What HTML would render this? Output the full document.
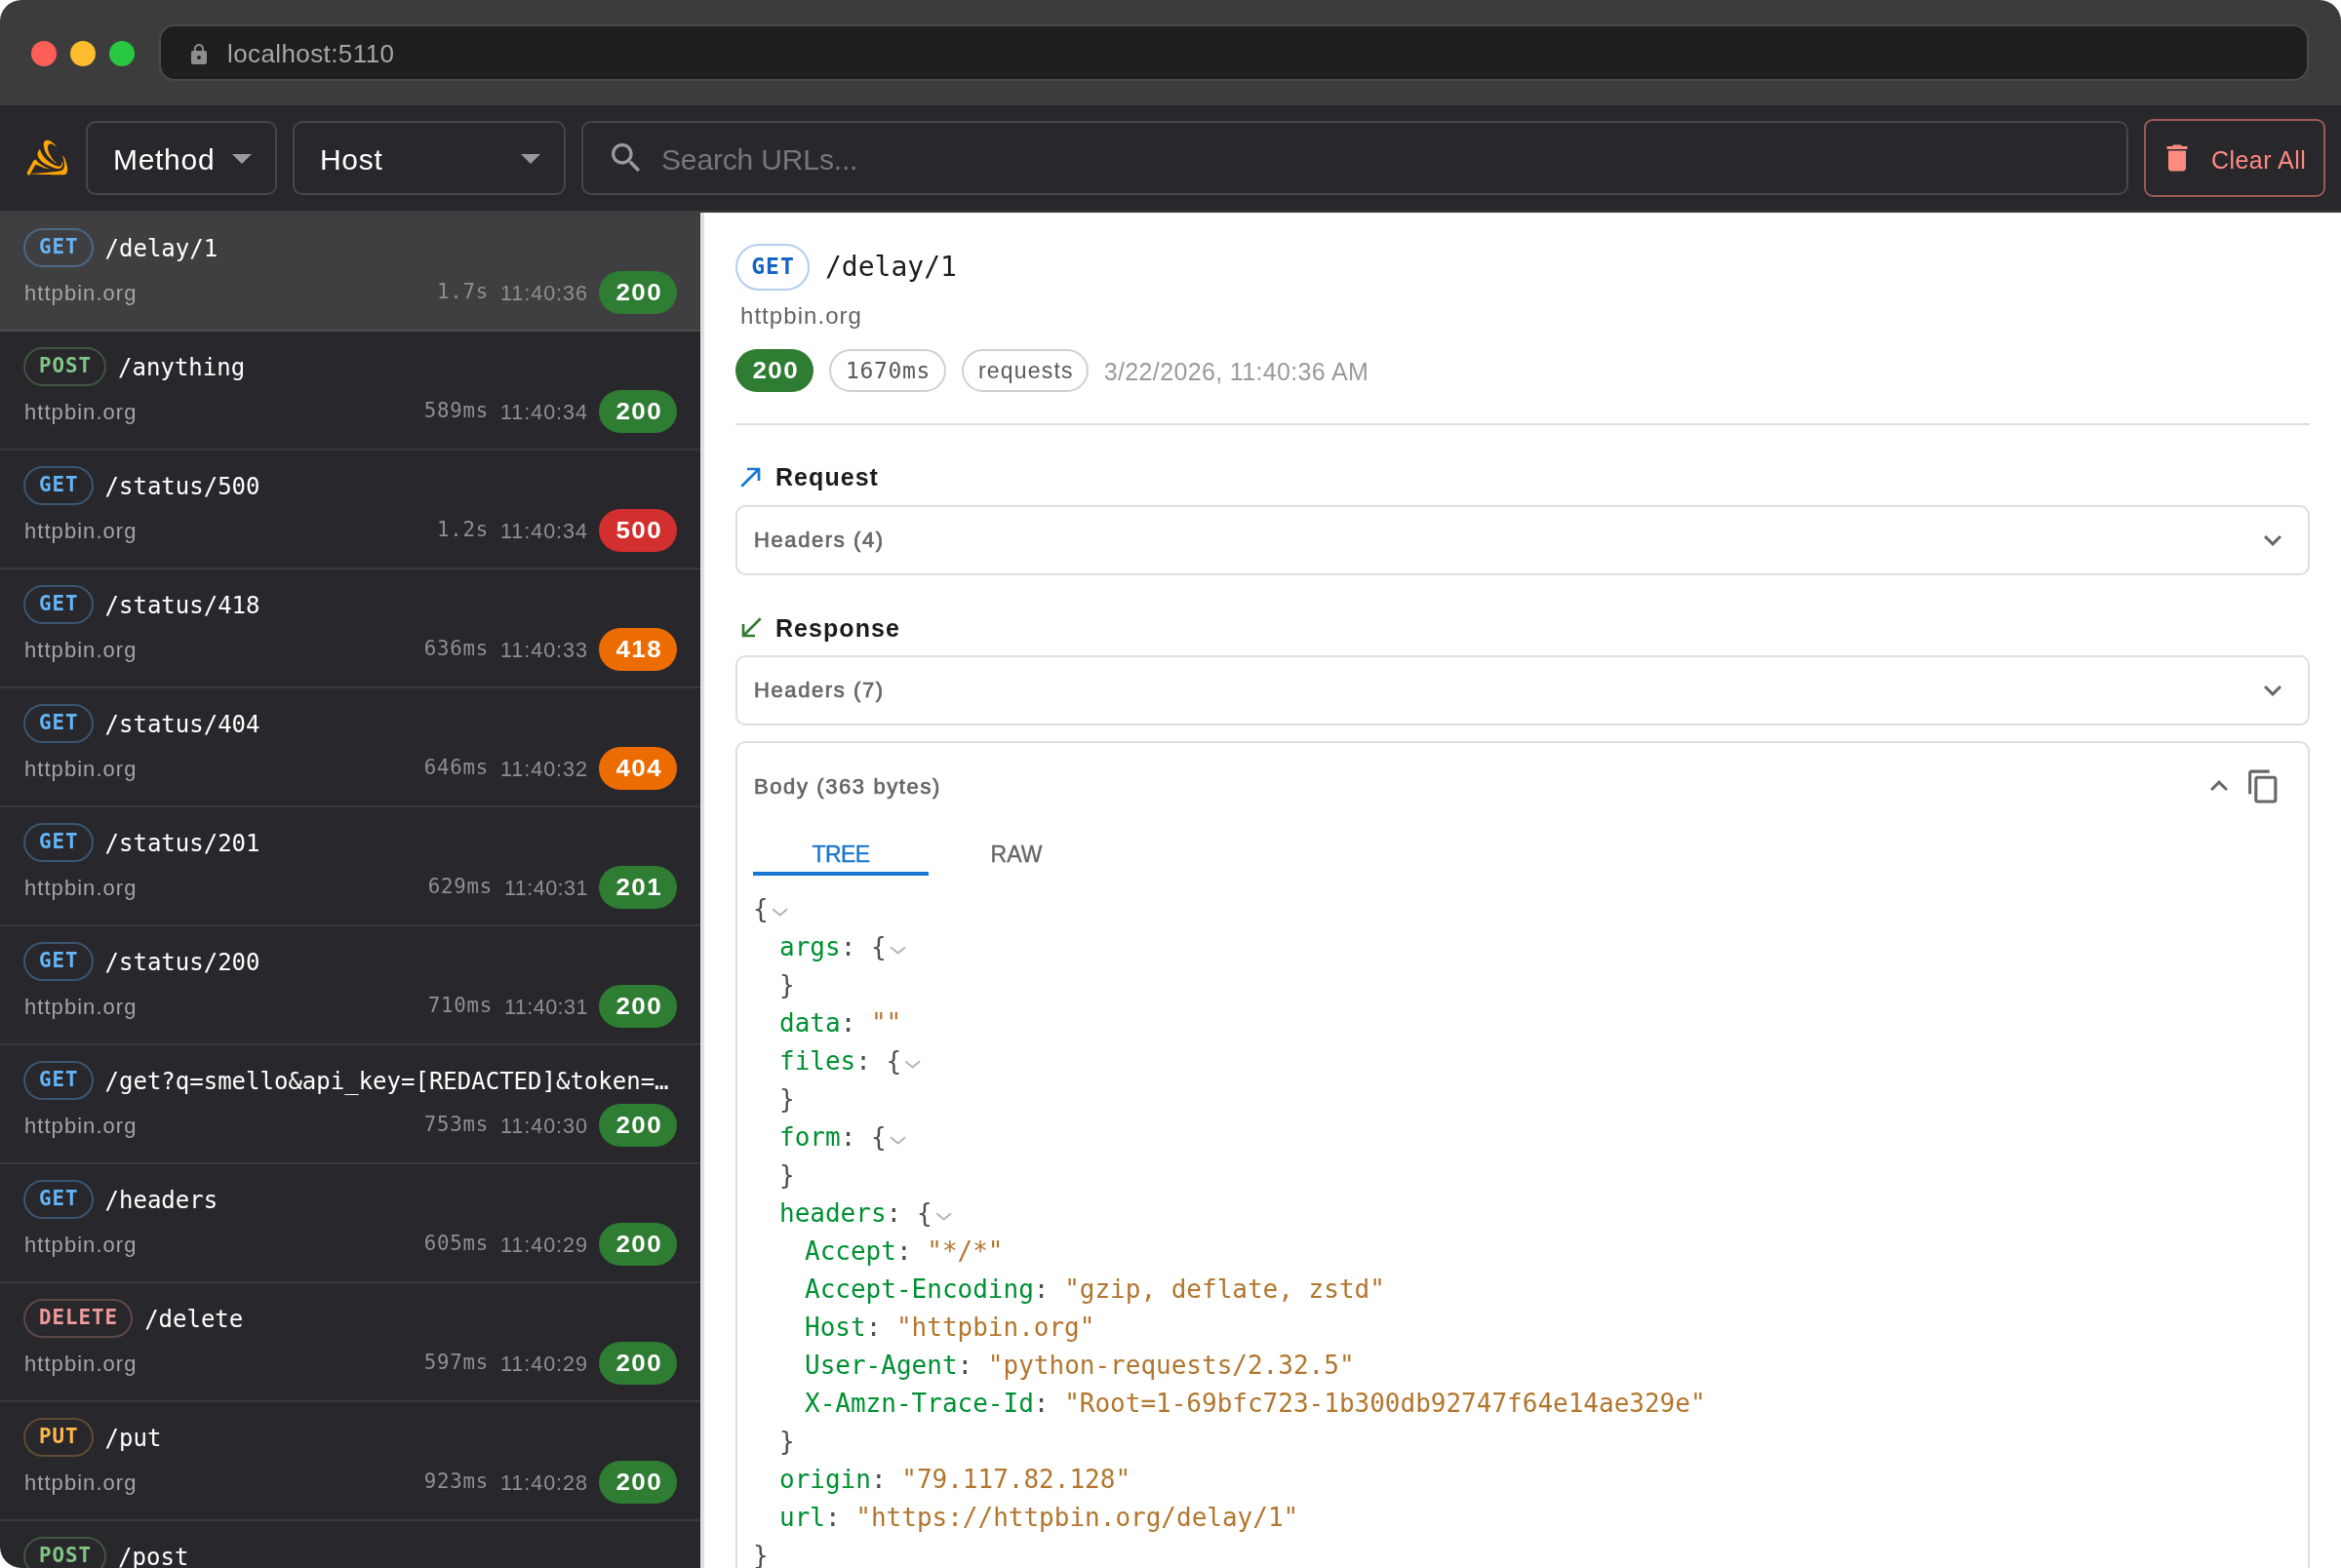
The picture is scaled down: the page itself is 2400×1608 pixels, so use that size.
<!DOCTYPE html>
<html lang="en">
<head>
<meta charset="utf-8">
<title>Smello</title>
<style>
*{box-sizing:border-box;margin:0;padding:0}
html,body{width:2400px;height:1608px;overflow:hidden;background:#fff}
body{font-family:"Liberation Sans",sans-serif;-webkit-font-smoothing:antialiased}
.mono{font-family:"DejaVu Sans Mono","Liberation Mono",monospace}
#win{position:absolute;left:0;top:0;width:2400px;height:1608px;overflow:hidden;border-radius:22px 22px 0 22px;background:#fff;will-change:transform}
/* browser chrome */
#chrome{position:absolute;left:0;top:0;width:2400px;height:108px;background:#3c3c3c}
.tl{position:absolute;top:42px;width:26px;height:26px;border-radius:50%}
#urlbar{position:absolute;left:163px;top:25px;width:2204px;height:58px;border-radius:16px;background:#1e1e1e;border:2px solid #4a4a4a}
#urlbar svg{position:absolute;left:27px;top:17px;width:24px;height:24px;fill:#8c8c8c}
#urlbar span{position:absolute;left:68px;top:0;line-height:56px;font-size:26px;color:#a6a6a6;letter-spacing:.4px}
/* toolbar */
#toolbar{position:absolute;left:0;top:108px;width:2400px;height:110px;background:#28272c;border-bottom:2px solid #2a2a2d}
#tbl{position:absolute;left:0;top:216px;width:2400px;height:1px;background:#3a3a3d}
#tbl2{position:absolute;left:0;top:217px;width:718px;height:1px;background:#3f3f41}
.sel{position:absolute;top:16px;height:76px;border:2px solid #47464b;border-radius:10px;color:#fff;font-size:30px;line-height:72px}
.sel span{position:absolute;left:26px;top:2px;letter-spacing:.7px}
.sel svg{position:absolute;top:12px;width:48px;height:48px;fill:#9a9a9c}
#search{position:absolute;left:596px;top:16px;width:1586px;height:76px;border:2px solid #47464b;border-radius:10px}
#search svg{position:absolute;left:24px;top:16px;width:40px;height:40px;fill:#9a9a9c}
#search span{position:absolute;left:80px;top:2px;line-height:72px;font-size:30px;color:#77767b;letter-spacing:-.15px}
#clear{position:absolute;left:2198px;top:14px;width:186px;height:80px;border:2px solid #9a5a57;border-radius:9px;color:#ff8a80}
#clear svg{position:absolute;left:14px;top:20px;width:36px;height:36px;fill:#ff8a80}
#clear span{position:absolute;left:67px;top:1px;line-height:78px;font-size:25px;letter-spacing:.45px}
/* list */
#list{position:absolute;left:0;top:218px;width:718px;height:1390px;background:#28272c;overflow:hidden}
.row{position:relative;height:122px;border-bottom:2px solid #39383d}
.row.on{background:#3f3f41;border-bottom-color:#4d4d4f}
.l1{position:absolute;left:24px;top:16px;height:40px;display:flex;align-items:center;width:670px;overflow:hidden}
.m{flex:none;height:40px;border:2px solid;border-radius:20px;padding:0 13px 0 14px;letter-spacing:1px;font-size:20.8px;font-weight:bold;line-height:35px;margin-right:12px}
.m.get{color:#64b5f6;border-color:#3a5672}
.m.post{color:#81c784;border-color:#3e553f}
.m.del{color:#ef9a9a;border-color:#5f484a}
.m.put{color:#ffb74d;border-color:#604c30}
.row.on .m.get{border-color:#4a6784}
.p{font-size:24px;line-height:40px;color:#fff;white-space:nowrap;padding-top:1px}
.h{position:absolute;left:25px;top:61px;font-size:22px;line-height:44px;color:#a4a4a6;letter-spacing:1.05px}
.l2{position:absolute;right:24px;top:60px;height:44px;display:flex;align-items:center}
.d{font-size:20.8px;color:#8f8f92;margin-right:12px;letter-spacing:.7px;margin-top:-2px}
.t{font-size:21.6px;color:#8f8f92;margin-right:11px;padding-top:1px;letter-spacing:.95px}
.t.n{letter-spacing:.45px}
.s{flex:none;width:80px;height:44px;border-radius:22px;color:#fff;font-weight:bold;font-size:23px;line-height:44px;text-align:center}
.s b{display:inline-block;position:relative;left:1px;transform:scaleX(1.13);letter-spacing:1.2px;padding-left:1.2px}
.g{background:#2e7d32}.r{background:#d32f2f}.o{background:#ed6c02}
#handle{position:absolute;left:718px;top:218px;width:4px;height:1390px;background:#e0e0e0}
/* detail */
#detail{position:absolute;left:722px;top:218px;width:1678px;height:1390px;background:#fff;overflow:hidden}

.dm{position:absolute;left:32px;top:32px;width:76px;height:48px;border:2px solid #b4cdee;border-radius:24px;color:#1565c0;font-weight:bold;font-size:23px;line-height:43px;text-align:center;letter-spacing:1px;padding-left:1px}
.dp{position:absolute;left:124px;top:32px;font-size:28px;line-height:48px;color:#1c1c1c}
.dh{position:absolute;left:37px;top:88px;font-size:24px;line-height:36px;color:#636363;letter-spacing:1.05px}
.chips{position:absolute;left:32px;top:140px;height:44px;display:flex;align-items:center}
.chips .s{margin-right:16px}
.oc{flex:none;height:44px;border:2px solid #d0d0d0;border-radius:22px;padding:0 14px 0 15px;font-size:23px;line-height:40px;color:#5a5a5a;margin-right:16px;letter-spacing:.65px}
.oc.sans{letter-spacing:1.2px;padding:0 13px 0 15px}
.ts{font-size:25px;color:#9a9a9a;padding-top:2px;letter-spacing:.35px}
.hr{position:absolute;left:32px;top:216px;width:1614px;height:2px;background:#dedede}
.sec{position:absolute;left:32px;height:32px;display:flex;align-items:center}
.sec svg{width:32px;height:32px;flex:none}
.sec span{margin-left:9px;font-size:25px;font-weight:bold;color:#1c1c1c;letter-spacing:1.05px}
.acc{position:absolute;left:32px;width:1614px;height:72px;border:2px solid #dedede;border-radius:10px}
.acc span,.bt{position:absolute;left:17px;top:0;line-height:68px;font-size:22px;color:#666;letter-spacing:1.6px;-webkit-text-stroke:.7px #666}
.acc svg{position:absolute;right:18px;top:16px;width:36px;height:36px;fill:#666}
#body{position:absolute;left:32px;top:542px;width:1614px;height:900px;border:2px solid #dedede;border-radius:10px}
#body .bt{top:11px}
.tab{position:absolute;top:94px;width:180px;height:40px;text-align:center;font-size:23px;line-height:40px;color:#666;-webkit-text-stroke:.4px #666}
.tab.on{color:#1976d2;letter-spacing:-.6px;-webkit-text-stroke:.4px #1976d2}
.ul{position:absolute;left:16px;top:132px;width:180px;height:4px;background:#1976d2}
.jv{position:absolute;left:16px;top:151px;font-size:26px;line-height:39px;color:#4d4d4d;white-space:pre}
.jv .i{padding-left:27px}
.jv .i .i{padding-left:26px}
.jv .k{color:#009033}
.jv .v{color:#b2762e}
.jv svg{display:inline-block;width:26px;height:26px;vertical-align:-7.8px;stroke:#4d4d4d;opacity:.42;fill:none;stroke-width:1.75;stroke-linecap:round;stroke-linejoin:round}
#logo{position:absolute;left:20px;top:27px;width:60px;height:55px}
</style>
</head>
<body>
<div id="win">
<div id="chrome">
  <div class="tl" style="left:32px;background:#ff5f57"></div>
  <div class="tl" style="left:72px;background:#febc2e"></div>
  <div class="tl" style="left:112px;background:#28c840"></div>
  <div id="urlbar">
    <svg viewBox="0 0 24 24"><path d="M18 8h-1V6c0-2.76-2.24-5-5-5S7 3.24 7 6v2H6c-1.1 0-2 .9-2 2v10c0 1.1.9 2 2 2h12c1.1 0 2-.9 2-2V10c0-1.1-.9-2-2-2zm-6 9c-1.1 0-2-.9-2-2s.9-2 2-2 2 .9 2 2-.9 2-2 2zm3.1-9H8.9V6c0-1.71 1.39-3.1 3.1-3.1 1.71 0 3.1 1.39 3.1 3.1v2z"/></svg>
    <span>localhost:5110</span>
  </div>
</div>
<div id="toolbar">
  <svg id="logo" viewBox="0 0 60 55" fill="#ffa500"><path d="M7.8 42.1C8.2 41.2 9.5 38.8 10.5 36.8C11.6 34.8 13.4 31.3 14.0 30.2C14.3 29.9 15.4 28.9 16.0 28.8C16.5 28.7 17.3 29.4 17.5 29.5C17.9 29.9 18.5 31.1 19.6 32.1C20.8 33.1 22.7 34.3 24.5 35.3C26.4 36.4 29.8 37.9 30.9 38.4C29.8 38.1 26.4 37.5 24.5 36.9C22.7 36.3 21.0 35.3 19.6 34.8C18.3 34.3 17.0 33.9 16.5 33.7C16.1 34.4 14.9 36.3 14.0 37.9C13.1 39.4 11.6 42.1 11.2 43.0C11.1 43.2 11.0 44.0 10.7 44.2C10.4 44.5 9.7 44.7 9.3 44.6C8.8 44.5 8.2 44.2 8.0 43.8C7.7 43.4 7.8 42.4 7.8 42.1Z"/><path d="M13.0 42.7C15.5 42.6 23.3 42.3 28.1 41.9C32.8 41.5 38.6 40.9 41.4 40.3C44.2 39.8 44.0 39.4 44.7 38.6C45.5 37.7 45.8 36.8 45.9 35.1C46.0 33.3 45.7 29.9 45.2 28.1C44.8 26.2 43.5 24.5 43.1 23.8C43.7 24.4 45.3 25.5 46.3 27.3C47.2 29.2 48.3 33.1 48.7 35.1C49.2 37.1 49.2 38.0 49.1 39.3C49.0 40.6 48.7 41.9 48.0 42.8C47.4 43.6 48.6 44.0 45.2 44.2C41.9 44.5 33.4 44.2 28.1 44.1C22.7 44.0 15.8 43.8 13.3 43.5C10.8 43.3 13.0 42.8 13.0 42.7Z"/><path d="M21.0 17.4C20.7 18.0 19.3 19.8 18.9 21.0C18.5 22.2 18.3 23.2 18.7 24.5C19.0 25.9 19.9 27.5 21.2 28.9C22.6 30.4 24.5 32.0 26.8 33.3C29.1 34.6 32.8 36.1 35.1 36.9C37.3 37.6 39.0 37.9 40.3 37.9C41.7 37.8 42.5 37.2 43.1 36.5C43.8 35.7 44.2 34.3 44.4 33.3C44.5 32.3 43.9 31.0 43.8 30.5C43.7 31.0 43.4 32.8 43.0 33.7C42.5 34.5 42.4 35.2 41.4 35.4C40.4 35.6 38.7 35.5 36.8 34.7C34.9 33.9 31.8 32.1 29.8 30.5C27.8 28.9 25.8 26.8 24.5 25.2C23.3 23.7 22.7 22.4 22.1 21.0C21.5 19.7 21.2 18.0 21.0 17.4Z"/><path d="M38.9 16.3C38.3 15.6 36.4 13.4 35.1 12.3C33.7 11.1 32.1 9.9 30.9 9.3C29.6 8.7 28.6 8.5 27.7 8.7C26.8 8.9 25.7 9.5 25.2 10.5C24.8 11.5 24.7 13.0 24.9 14.7C25.1 16.5 25.7 19.0 26.6 21.0C27.6 23.1 29.3 25.3 30.9 27.0C32.4 28.7 34.4 30.2 35.8 31.2C37.2 32.2 38.7 32.5 39.3 32.8C38.6 32.2 36.3 30.8 35.1 29.5C33.8 28.1 32.5 26.2 31.6 24.5C30.6 22.9 29.9 21.2 29.5 19.6C29.0 18.1 28.9 16.5 29.1 15.4C29.3 14.3 29.7 13.4 30.5 13.0C31.3 12.6 32.3 12.4 33.7 13.0C35.1 13.5 38.0 15.7 38.9 16.3Z"/></svg>
  <div class="sel" style="left:88px;width:196px"><span>Method</span><svg style="left:134px" viewBox="0 0 24 24"><path d="M7 10l5 5 5-5z"/></svg></div>
  <div class="sel" style="left:300px;width:280px"><span>Host</span><svg style="left:218px" viewBox="0 0 24 24"><path d="M7 10l5 5 5-5z"/></svg></div>
  <div id="search"><svg viewBox="0 0 24 24"><path d="M15.5 14h-.79l-.28-.27C15.41 12.59 16 11.11 16 9.5 16 5.91 13.09 3 9.5 3S3 5.91 3 9.5 5.91 16 9.5 16c1.61 0 3.09-.59 4.23-1.57l.27.28v.79l5 4.99L20.49 19l-4.99-5zm-6 0C7.01 14 5 11.99 5 9.5S7.01 5 9.5 5 14 7.01 14 9.5 11.99 14 9.5 14z"/></svg><span>Search URLs...</span></div>
  <div id="clear"><svg viewBox="0 0 24 24"><path d="M6 19c0 1.1.9 2 2 2h8c1.1 0 2-.9 2-2V7H6v12zM19 4h-3.5l-1-1h-5l-1 1H5v2h14V4z"/></svg><span>Clear All</span></div>
</div>
<div id="tbl"></div><div id="tbl2"></div>
<div id="list">
  <div class="row on"><div class="l1"><div class="m mono get">GET</div><div class="p mono">/delay/1</div></div><div class="h">httpbin.org</div><div class="l2"><span class="d mono">1.7s</span><span class="t">11:40:36</span><span class="s g"><b>200</b></span></div></div>
  <div class="row"><div class="l1"><div class="m mono post">POST</div><div class="p mono">/anything</div></div><div class="h">httpbin.org</div><div class="l2"><span class="d mono">589ms</span><span class="t">11:40:34</span><span class="s g"><b>200</b></span></div></div>
  <div class="row"><div class="l1"><div class="m mono get">GET</div><div class="p mono">/status/500</div></div><div class="h">httpbin.org</div><div class="l2"><span class="d mono">1.2s</span><span class="t">11:40:34</span><span class="s r"><b>500</b></span></div></div>
  <div class="row"><div class="l1"><div class="m mono get">GET</div><div class="p mono">/status/418</div></div><div class="h">httpbin.org</div><div class="l2"><span class="d mono">636ms</span><span class="t">11:40:33</span><span class="s o"><b>418</b></span></div></div>
  <div class="row"><div class="l1"><div class="m mono get">GET</div><div class="p mono">/status/404</div></div><div class="h">httpbin.org</div><div class="l2"><span class="d mono">646ms</span><span class="t">11:40:32</span><span class="s o"><b>404</b></span></div></div>
  <div class="row"><div class="l1"><div class="m mono get">GET</div><div class="p mono">/status/201</div></div><div class="h">httpbin.org</div><div class="l2"><span class="d mono">629ms</span><span class="t n">11:40:31</span><span class="s g"><b>201</b></span></div></div>
  <div class="row"><div class="l1"><div class="m mono get">GET</div><div class="p mono">/status/200</div></div><div class="h">httpbin.org</div><div class="l2"><span class="d mono">710ms</span><span class="t n">11:40:31</span><span class="s g"><b>200</b></span></div></div>
  <div class="row"><div class="l1"><div class="m mono get">GET</div><div class="p mono">/get?q=smello&amp;api_key=[REDACTED]&amp;token=…</div></div><div class="h">httpbin.org</div><div class="l2"><span class="d mono">753ms</span><span class="t">11:40:30</span><span class="s g"><b>200</b></span></div></div>
  <div class="row"><div class="l1"><div class="m mono get">GET</div><div class="p mono">/headers</div></div><div class="h">httpbin.org</div><div class="l2"><span class="d mono">605ms</span><span class="t">11:40:29</span><span class="s g"><b>200</b></span></div></div>
  <div class="row"><div class="l1"><div class="m mono del">DELETE</div><div class="p mono">/delete</div></div><div class="h">httpbin.org</div><div class="l2"><span class="d mono">597ms</span><span class="t">11:40:29</span><span class="s g"><b>200</b></span></div></div>
  <div class="row"><div class="l1"><div class="m mono put">PUT</div><div class="p mono">/put</div></div><div class="h">httpbin.org</div><div class="l2"><span class="d mono">923ms</span><span class="t">11:40:28</span><span class="s g"><b>200</b></span></div></div>
  <div class="row"><div class="l1"><div class="m mono post">POST</div><div class="p mono">/post</div></div><div class="h">httpbin.org</div></div>
</div>
<div id="handle"></div>
<div id="detail">
  <div class="dm mono">GET</div><div class="dp mono">/delay/1</div>
  <div class="dh">httpbin.org</div>
  <div class="chips"><span class="s g"><b>200</b></span><span class="oc mono">1670ms</span><span class="oc sans">requests</span><span class="ts">3/22/2026, 11:40:36 AM</span></div>
  <div class="hr"></div>
  <div class="sec" style="top:255px"><svg viewBox="0 0 24 24" fill="#1976d2"><path d="M9 5v2h6.59L4 18.59 5.41 20 17 8.41V15h2V5z"/></svg><span>Request</span></div>
  <div class="acc" style="top:300px"><span>Headers (4)</span><svg viewBox="0 0 24 24"><path d="M16.59 8.59 12 13.17 7.41 8.59 6 10l6 6 6-6z"/></svg></div>
  <div class="sec" style="top:410px"><svg viewBox="0 0 24 24" fill="#2e7d32"><path d="M20 5.41 18.59 4 7 15.59V9H5v10h10v-2H8.41z"/></svg><span>Response</span></div>
  <div class="acc" style="top:454px"><span>Headers (7)</span><svg viewBox="0 0 24 24"><path d="M16.59 8.59 12 13.17 7.41 8.59 6 10l6 6 6-6z"/></svg></div>
  <div id="body">
    <div class="bt">Body (363 bytes)</div>
    <svg style="position:absolute;left:1501px;top:26px;width:36px;height:36px;fill:#666" viewBox="0 0 24 24"><path d="m12 8-6 6 1.41 1.41L12 10.83l4.59 4.58L18 14z"/></svg>
    <svg style="position:absolute;left:1546px;top:26px;width:37px;height:37px;fill:#666" viewBox="0 0 24 24"><path d="M16 1H4c-1.1 0-2 .9-2 2v14h2V3h12V1zm3 4H8c-1.1 0-2 .9-2 2v14c0 1.1.9 2 2 2h11c1.1 0 2-.9 2-2V7c0-1.1-.9-2-2-2zm0 16H8V7h11v14z"/></svg>
    <div class="tab on" style="left:16px">TREE</div><div class="tab" style="left:196px">RAW</div>
    <div class="ul"></div>
    <div class="jv mono"><div>{<svg viewBox="0 0 24 24"><path d="M4.4 9 10.7 14.3 17.1 9"/></svg></div><div class="i"><div><span class="k">args</span>: {<svg viewBox="0 0 24 24"><path d="M4.4 9 10.7 14.3 17.1 9"/></svg></div><div>}</div><div><span class="k">data</span>: <span class="v">""</span></div><div><span class="k">files</span>: {<svg viewBox="0 0 24 24"><path d="M4.4 9 10.7 14.3 17.1 9"/></svg></div><div>}</div><div><span class="k">form</span>: {<svg viewBox="0 0 24 24"><path d="M4.4 9 10.7 14.3 17.1 9"/></svg></div><div>}</div><div><span class="k">headers</span>: {<svg viewBox="0 0 24 24"><path d="M4.4 9 10.7 14.3 17.1 9"/></svg></div><div class="i"><div><span class="k">Accept</span>: <span class="v">"*/*"</span></div><div><span class="k">Accept-Encoding</span>: <span class="v">"gzip, deflate, zstd"</span></div><div><span class="k">Host</span>: <span class="v">"httpbin.org"</span></div><div><span class="k">User-Agent</span>: <span class="v">"python-requests/2.32.5"</span></div><div><span class="k">X-Amzn-Trace-Id</span>: <span class="v">"Root=1-69bfc723-1b300db92747f64e14ae329e"</span></div></div><div>}</div><div><span class="k">origin</span>: <span class="v">"79.117.82.128"</span></div><div><span class="k">url</span>: <span class="v">"https://httpbin.org/delay/1"</span></div></div><div>}</div></div>
  </div>
</div>
</div>
</body>
</html>
